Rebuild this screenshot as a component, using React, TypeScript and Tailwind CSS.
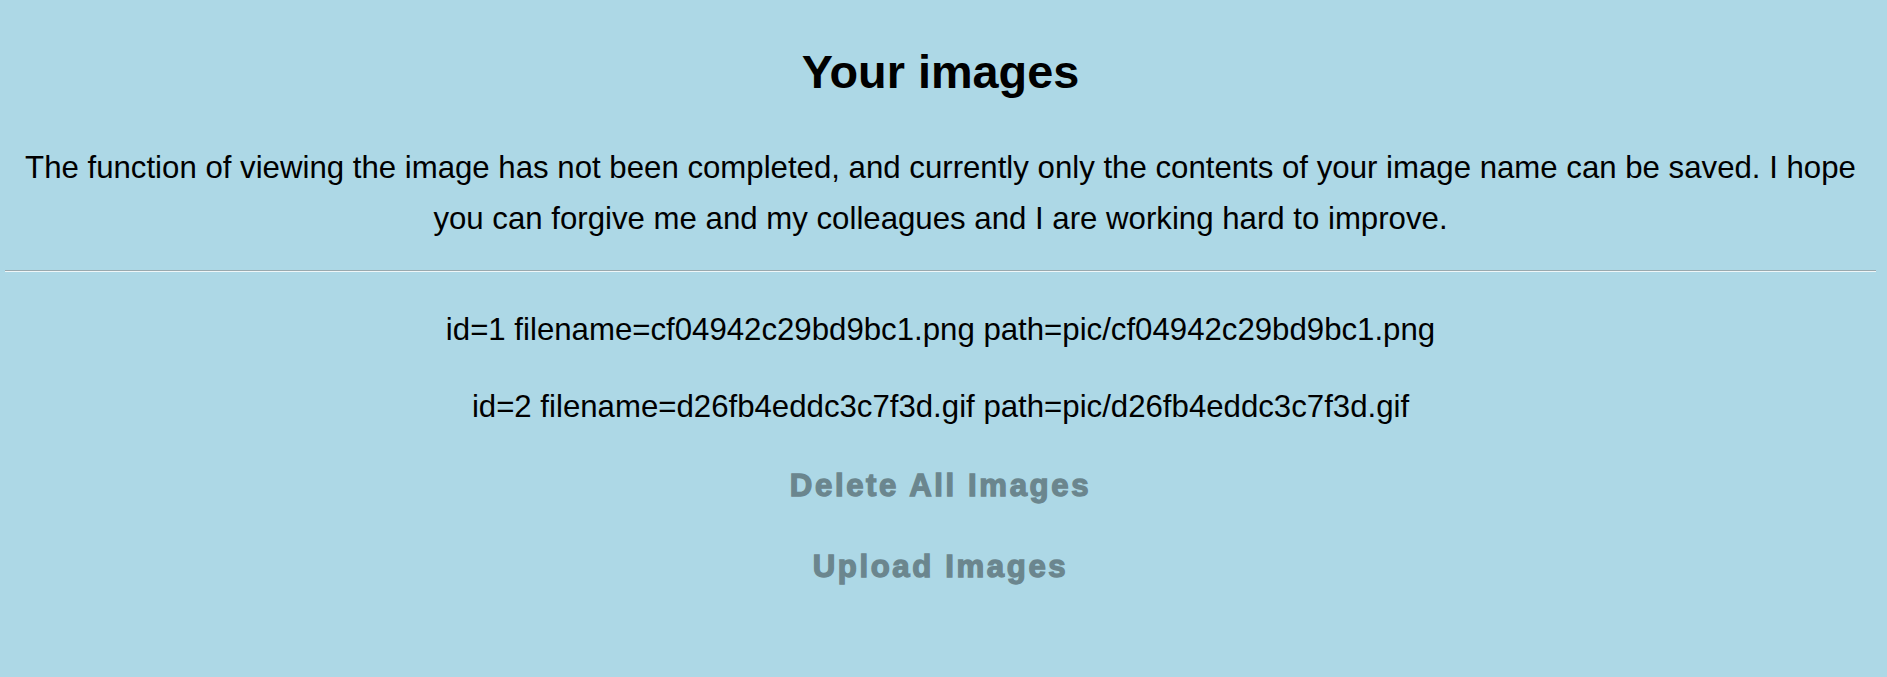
import React from "react";

export default function App() {
  return (
    <div
      className="min-h-[677px] w-full bg-[#add8e6] text-black text-center"
      style={{ fontFamily: '"Liberation Sans", Arial, sans-serif' }}
    >
      <div className="pt-[45px] pl-[5px] pr-[11px]">
        <h1 className="text-[46.8px] leading-[54px] font-bold">Your images</h1>
        <p className="mt-[43px] text-[31.2px] leading-[51px] px-[15px]">
          The function of viewing the image has not been completed, and currently only the contents of your image name can be saved. I hope you can forgive me and my colleagues and I are working hard to improve.
        </p>
        <hr className="mt-[26px] w-full border-0 border-t border-t-[#9aa9ae] border-b border-b-[#eef6f8] h-0" />
        <div className="mt-[40px] flex flex-col items-center gap-[41px] text-[31.2px] leading-[36px]">
          <div>id=1 filename=cf04942c29bd9bc1.png path=pic/cf04942c29bd9bc1.png</div>
          <div>id=2 filename=d26fb4eddc3c7f3d.gif path=pic/d26fb4eddc3c7f3d.gif</div>
        </div>
        <div className="mt-[43px] flex flex-col items-center gap-[45px]">
          <button className="text-[31.2px] leading-[36px] font-bold tracking-[2.6px] text-[#6b868e] [-webkit-text-stroke:1.3px_#6b868e] cursor-pointer">
            Delete All Images
          </button>
          <button className="text-[31.2px] leading-[36px] font-bold tracking-[2.6px] text-[#6b868e] [-webkit-text-stroke:1.3px_#6b868e] cursor-pointer">
            Upload Images
          </button>
        </div>
      </div>
    </div>
  );
}
